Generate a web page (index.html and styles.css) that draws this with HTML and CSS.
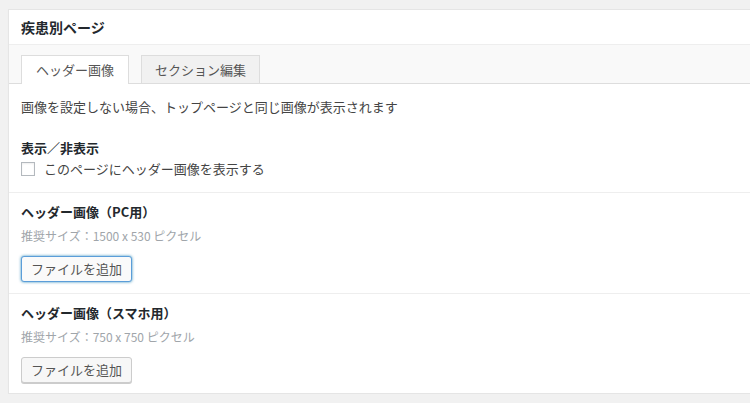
FILE: index.html
```html
<!DOCTYPE html>
<html lang="ja">
<head>
<meta charset="utf-8">
<title>疾患別ページ</title>
<link rel="stylesheet" href="styles.css">
</head>
<body>
<div class="postbox">
  <div class="hndle">疾患別ページ</div>
  <div class="tabs">
    <div class="tab active">ヘッダー画像</div>
    <div class="tab">セクション編集</div>
  </div>
  <div class="section first">
    <p class="note">画像を設定しない場合、トップページと同じ画像が表示されます</p>
    <div class="label">表示／非表示</div>
    <label class="check"><span class="box"></span>このページにヘッダー画像を表示する</label>
  </div>
  <div class="section">
    <div class="label">ヘッダー画像（PC用）</div>
    <div class="desc">推奨サイズ：1500 x 530 ピクセル</div>
    <button class="btn focus">ファイルを追加</button>
  </div>
  <div class="section last">
    <div class="label">ヘッダー画像（スマホ用）</div>
    <div class="desc">推奨サイズ：750 x 750 ピクセル</div>
    <button class="btn">ファイルを追加</button>
  </div>
</div>
</body>
</html>
```
FILE: styles.css
```css
html, body {
  margin: 0;
  padding: 0;
  background: #f1f1f1;
  overflow: hidden;
}
body {
  padding: 9px 0 0 8px;
  font-family: "Noto Sans CJK JP", "Noto Sans", sans-serif;
  color: #444;
  font-size: 13px;
}
.postbox {
  width: 760px;
  background: #fff;
  border: 1px solid #e5e5e5;
  box-shadow: 0 1px 1px rgba(0,0,0,.04);
}
.hndle {
  height: 34px;
  line-height: 34px;
  padding: 0 12px;
  font-size: 14px;
  font-weight: bold;
  color: #23282d;
  border-bottom: 1px solid #eee;
}
.tabs {
  display: flex;
  gap: 12px;
  background: #f9f9f9;
  padding: 10px 12px 0;
  border-bottom: 1px solid #ddd;
  height: 28px;
}
.tab {
  height: 27px;
  line-height: 27px;
  padding: 0 13px;
  border: 1px solid #ddd;
  border-bottom: none;
  background: #f1f1f1;
  color: #555;
  font-size: 13px;
}
.tab.active {
  background: #fff;
  height: 28px;
  padding: 0 14px;
}
.section {
  padding: 9px 12px 11px;
  border-bottom: 1px solid #eee;
}
.section.last {
  border-bottom: none;
  padding-bottom: 10px;
}
.section.first {
  padding-top: 13px;
  padding-bottom: 13px;
}
.note {
  margin: 0 0 21px;
  line-height: 20px;
  color: #444;
}
.label {
  font-weight: bold;
  line-height: 20px;
  color: #23282d;
}
.check {
  display: flex;
  align-items: center;
  gap: 9px;
  line-height: 20px;
  margin-top: 1px;
  color: #444;
}
.box {
  width: 14px;
  height: 14px;
  border: 1px solid #b4b9be;
  background: #fff;
  box-shadow: inset 0 1px 2px rgba(0,0,0,.07);
  box-sizing: border-box;
}
.desc {
  font-size: 12px;
  color: #a0a5aa;
  line-height: 20px;
  margin: 4px 0 10px;
}
.btn {
  font-family: inherit;
  font-size: 13px;
  height: 26px;
  line-height: 24px;
  padding: 0 9px;
  color: #555;
  background: #f7f7f7;
  border: 1px solid #ccc;
  border-radius: 3px;
  box-shadow: 0 1px 0 #ccc;
  display: block;
}
.btn.focus {
  border-color: #5b9dd9;
  box-shadow: 0 0 3px rgba(0,115,170,.8);
  background: #fafafa;
}
```
